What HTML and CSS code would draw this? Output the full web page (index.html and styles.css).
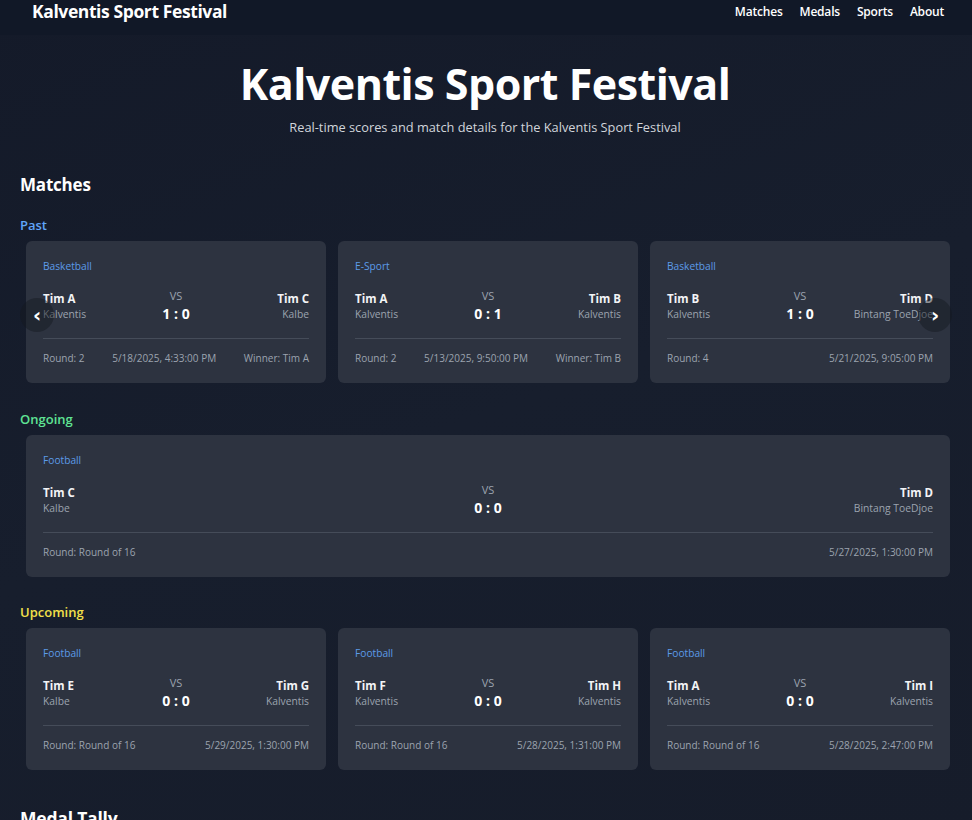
FILE: index.html
```html
<!DOCTYPE html>
<html lang="en">
<head>
<meta charset="utf-8">
<title>Kalventis Sport Festival</title>
<link rel="stylesheet" href="styles.css">
</head>
<body>
<header class="topbar">
  <div class="brand">Kalventis Sport Festival</div>
  <nav class="nav">
    <a href="#">Matches</a>
    <a href="#">Medals</a>
    <a href="#">Sports</a>
    <a href="#">About</a>
  </nav>
</header>
<main class="page">
  <section class="hero">
    <h1>Kalventis Sport Festival</h1>
    <p>Real-time scores and match details for the Kalventis Sport Festival</p>
  </section>

  <section class="matches">
    <h2 class="section-title">Matches</h2>

    <h3 class="group-title past">Past</h3>
    <div class="carousel">
      <div class="row">
        <div class="card">
          <div class="sport">Basketball</div>
          <div class="teams">
            <div class="team"><div class="tname">Tim A</div><div class="school">Kalventis</div></div>
            <div class="mid"><div class="vs">VS</div><div class="score">1 : 0</div></div>
            <div class="team right"><div class="tname">Tim C</div><div class="school">Kalbe</div></div>
          </div>
          <div class="foot"><span>Round: 2</span><span>5/18/2025, 4:33:00 PM</span><span>Winner: Tim A</span></div>
        </div>
        <div class="card">
          <div class="sport">E-Sport</div>
          <div class="teams">
            <div class="team"><div class="tname">Tim A</div><div class="school">Kalventis</div></div>
            <div class="mid"><div class="vs">VS</div><div class="score">0 : 1</div></div>
            <div class="team right"><div class="tname">Tim B</div><div class="school">Kalventis</div></div>
          </div>
          <div class="foot"><span>Round: 2</span><span>5/13/2025, 9:50:00 PM</span><span>Winner: Tim B</span></div>
        </div>
        <div class="card">
          <div class="sport">Basketball</div>
          <div class="teams">
            <div class="team"><div class="tname">Tim B</div><div class="school">Kalventis</div></div>
            <div class="mid"><div class="vs">VS</div><div class="score">1 : 0</div></div>
            <div class="team right"><div class="tname">Tim D</div><div class="school">Bintang ToeDjoe</div></div>
          </div>
          <div class="foot"><span>Round: 4</span><span>5/21/2025, 9:05:00 PM</span></div>
        </div>
      </div>
      <button class="arrow prev" aria-label="Previous">&#8249;</button>
      <button class="arrow next" aria-label="Next">&#8250;</button>
    </div>

    <h3 class="group-title ongoing">Ongoing</h3>
    <div class="row">
      <div class="card wide">
        <div class="sport">Football</div>
        <div class="teams">
          <div class="team"><div class="tname">Tim C</div><div class="school">Kalbe</div></div>
          <div class="mid"><div class="vs">VS</div><div class="score">0 : 0</div></div>
          <div class="team right"><div class="tname">Tim D</div><div class="school">Bintang ToeDjoe</div></div>
        </div>
        <div class="foot"><span>Round: Round of 16</span><span>5/27/2025, 1:30:00 PM</span></div>
      </div>
    </div>

    <h3 class="group-title upcoming">Upcoming</h3>
    <div class="row">
      <div class="card">
        <div class="sport">Football</div>
        <div class="teams">
          <div class="team"><div class="tname">Tim E</div><div class="school">Kalbe</div></div>
          <div class="mid"><div class="vs">VS</div><div class="score">0 : 0</div></div>
          <div class="team right"><div class="tname">Tim G</div><div class="school">Kalventis</div></div>
        </div>
        <div class="foot"><span>Round: Round of 16</span><span>5/29/2025, 1:30:00 PM</span></div>
      </div>
      <div class="card">
        <div class="sport">Football</div>
        <div class="teams">
          <div class="team"><div class="tname">Tim F</div><div class="school">Kalventis</div></div>
          <div class="mid"><div class="vs">VS</div><div class="score">0 : 0</div></div>
          <div class="team right"><div class="tname">Tim H</div><div class="school">Kalventis</div></div>
        </div>
        <div class="foot"><span>Round: Round of 16</span><span>5/28/2025, 1:31:00 PM</span></div>
      </div>
      <div class="card">
        <div class="sport">Football</div>
        <div class="teams">
          <div class="team"><div class="tname">Tim A</div><div class="school">Kalventis</div></div>
          <div class="mid"><div class="vs">VS</div><div class="score">0 : 0</div></div>
          <div class="team right"><div class="tname">Tim I</div><div class="school">Kalventis</div></div>
        </div>
        <div class="foot"><span>Round: Round of 16</span><span>5/28/2025, 2:47:00 PM</span></div>
      </div>
    </div>
  </section>

  <section class="medals">
    <h2 class="section-title">Medal Tally</h2>
  </section>
</main>
</body>
</html>
```

FILE: styles.css
```css
* { box-sizing: border-box; }
html, body { margin: 0; padding: 0; }
body {
  font-family: "Open Sans", "Noto Sans", sans-serif;
  color: #f3f4f6;
  background: linear-gradient(160deg, #141a29 0%, #171e2d 50%, #161c2a 100%);
  min-height: 820px;
  overflow: hidden;
}
.topbar {
  height: 35px;
  background: #111827;
  display: flex;
  align-items: flex-start;
  justify-content: space-between;
  padding: 0 28px 0 32px;
}
.brand {
  font-size: 17.5px;
  line-height: 23px;
  font-weight: 700;
  color: #ffffff;
  letter-spacing: -0.4px;
}
.nav { display: flex; gap: 17px; padding-top: 3px; }
.nav a {
  color: #ffffff;
  text-decoration: none;
  font-size: 12px;
  line-height: 17px;
  font-weight: 600;
  letter-spacing: -0.2px;
}
.page { padding: 0 22px 0 20px; }
.hero { text-align: center; padding-top: 21px; }
.hero h1 {
  margin: 0;
  font-size: 43px;
  line-height: 56px;
  font-weight: 700;
  color: #ffffff;
  letter-spacing: -0.5px;
}
.hero p {
  margin: 6px 0 0;
  font-size: 12.8px;
  line-height: 18px;
  color: #d1d5db;
}
.section-title {
  margin: 37px 0 0;
  font-size: 17px;
  line-height: 24px;
  font-weight: 700;
  color: #ffffff;
  letter-spacing: -0.2px;
}
.group-title {
  margin: 20px 0 8px;
  font-size: 13px;
  line-height: 16px;
  font-weight: 600;
}
.group-title.past { color: #60a5fa; }
.group-title.ongoing { color: #5fe394; margin-top: 28px; }
.group-title.upcoming { color: #f3e04a; margin-top: 27px; }
.carousel { position: relative; }
.row {
  display: flex;
  gap: 12px;
  margin-left: 6px;
}
.card {
  width: 300px;
  background: #2d3340;
  border-radius: 6px;
  padding: 17px 17px 17px;
}
.card.wide { width: 924px; }
.sport {
  font-size: 10.2px;
  line-height: 16px;
  color: #5c9be8;
}
.teams {
  display: flex;
  justify-content: space-between;
  align-items: center;
  margin-top: 16px;
  padding-bottom: 15px;
  border-bottom: 1px solid #454c59;
}
.team { width: 110px; }
.team.right { text-align: right; }
.tname {
  font-size: 11.5px;
  line-height: 16px;
  font-weight: 700;
  color: #f3f4f6;
}
.school {
  font-size: 10.3px;
  line-height: 15px;
  color: #9ca3af;
}
.mid { text-align: center; margin-top: -2px; }
.vs {
  font-size: 11px;
  line-height: 16px;
  color: #9ca3af;
}
.score {
  font-size: 14px;
  line-height: 19px;
  font-weight: 700;
  color: #ffffff;
}
.foot {
  display: flex;
  justify-content: space-between;
  padding-top: 11px;
  font-size: 10px;
  line-height: 16px;
  color: #9ca3af;
}
.arrow {
  position: absolute;
  top: 57px;
  width: 34px;
  height: 34px;
  border-radius: 50%;
  border: none;
  background: rgba(20, 24, 32, 0.45);
  color: #ffffff;
  font-size: 20px;
  font-weight: 700;
  line-height: 30px;
  padding: 0;
  font-family: "DejaVu Sans", sans-serif;
}
.arrow.prev { left: 0; }
.arrow.next { right: -2px; }
.medals .section-title { margin-top: 36px; font-size: 17.5px; }
```
